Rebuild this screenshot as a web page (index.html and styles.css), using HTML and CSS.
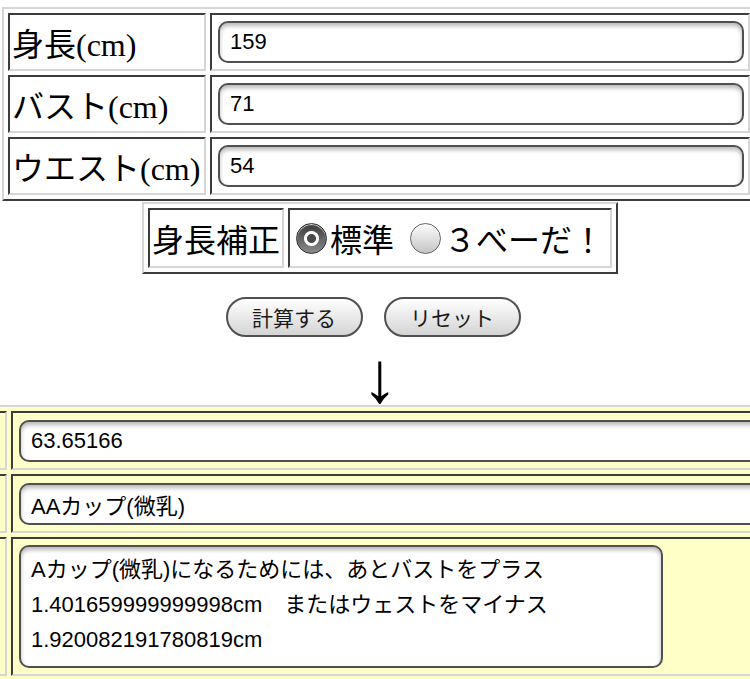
FILE: index.html
```html
<!DOCTYPE html>
<html lang="ja">
<head>
<meta charset="utf-8">
<title>カップ判定</title>
<link rel="stylesheet" href="styles.css">
</head>
<body>
<div class="wrap">
  <div class="tbl t1">
    <div class="cell lbl">身長(cm)</div>
    <div class="cell fld"><input class="box" type="text" value="159"></div>
    <div class="cell lbl">バスト(cm)</div>
    <div class="cell fld"><input class="box" type="text" value="71"></div>
    <div class="cell lbl">ウエスト(cm)</div>
    <div class="cell fld"><input class="box" type="text" value="54"></div>
  </div>
  <div class="tbl t2">
    <div class="cell lbl">身長補正</div>
    <div class="cell radios">
      <label class="opt"><input type="radio" name="h" class="rad" checked>標準</label>
      <label class="opt"><input type="radio" name="h" class="rad">３べーだ！</label>
    </div>
  </div>
  <div class="btns">
    <button class="btn" type="button">計算する</button>
    <button class="btn" type="button">リセット</button>
  </div>
  <div class="arrow">↓</div>
</div>
<div class="tbl t3">
  <div class="cell side"></div>
  <div class="cell fld"><input class="box" type="text" value="63.65166"></div>
  <div class="cell side"></div>
  <div class="cell fld"><input class="box" type="text" value="AAカップ(微乳)"></div>
  <div class="cell side"></div>
  <div class="cell fld top"><textarea class="box area">Aカップ(微乳)になるためには、あとバストをプラス
1.401659999999998cm　またはウェストをマイナス
1.920082191780819cm</textarea></div>
</div>
</body>
</html>
```
FILE: styles.css
```css
html, body {
  margin: 0;
  padding: 0;
  overflow: hidden;
  background: #fff;
}
body {
  font-family: "Liberation Serif", "Noto Sans CJK JP", serif;
  color: #000;
}
.wrap {
  width: 760px;
  padding-top: 7px;
}
.tbl {
  display: grid;
  gap: 4px;
  padding: 4px;
  border: 2px solid;
  border-color: #d6d6d6 #3c3c3c #3c3c3c #d6d6d6;
  box-sizing: border-box;
}
.cell {
  border: 2px solid;
  border-color: #3c3c3c #d6d6d6 #d6d6d6 #3c3c3c;
  padding: 2px;
  box-sizing: border-box;
  display: flex;
  align-items: center;
  min-width: 0;
}
.lbl {
  font-size: 32px;
  white-space: nowrap;
}
.t1 {
  margin-left: 2px;
  width: 754px;
  grid-template-columns: 198px 540px;
  grid-auto-rows: 58px;
}
.box {
  box-sizing: border-box;
  height: 42px;
  margin: 0 0 0 4px;
  border: 2px solid #505050;
  border-radius: 10px;
  background: #fff;
  box-shadow: inset 0 3px 4px rgba(0, 0, 0, 0.28);
  font-family: "Liberation Sans", "Noto Sans CJK JP", sans-serif;
  font-size: 22px;
  padding: 0 10px;
  color: #000;
  -webkit-appearance: none;
  appearance: none;
  outline: none;
}
.t1 .box {
  width: 526px;
}
.t2 {
  width: 476px;
  margin: 1px auto 0;
  grid-template-columns: 136px 324px;
  grid-auto-rows: 60px;
}
.radios {
  font-size: 32px;
  white-space: nowrap;
}
.opt {
  display: flex;
  align-items: center;
}
.opt + .opt {
  margin-left: 12px;
}
.rad {
  -webkit-appearance: none;
  appearance: none;
  box-sizing: border-box;
  width: 31px;
  height: 31px;
  margin: 0 3px 0 4px;
  border-radius: 50%;
  border: 1px solid #666;
  background: linear-gradient(#fdfdfd, #c4c4c4);
  box-shadow: inset 0 1px 1px rgba(255, 255, 255, 0.9);
}
.rad:checked {
  border-color: #2e2e2e;
  background:
    radial-gradient(circle, #4a4a4a 0 4px, #fff 5px 7px, rgba(255, 255, 255, 0) 8px),
    linear-gradient(#3a3a3a, #8c8c8c);
}
.btns {
  display: flex;
  justify-content: center;
  gap: 21px;
  margin-top: 23px;
  padding-right: 14px;
}
.btn {
  box-sizing: border-box;
  width: 137px;
  height: 40px;
  padding: 0;
  border: 2px solid #505050;
  border-radius: 20px;
  background: linear-gradient(#ffffff, #d4d4d4);
  font-family: "Liberation Sans", "Noto Sans CJK JP", sans-serif;
  font-size: 21px;
  color: #1a1a1a;
}
.arrow {
  height: 68px;
  font-family: "Liberation Serif", "Noto Sans CJK JP", serif;
  font-size: 72px;
  line-height: 82px;
  text-align: center;
  padding-left: 0;
}
.t3 {
  margin-left: -100px;
  width: 1000px;
  background: #ffffc8;
  grid-template-columns: 101px 1fr;
  grid-template-rows: 59px 59px auto;
}
.t3 .cell {
  background: #ffffc8;
}
.t3 .box {
  width: 800px;
}
.t3 .top {
  align-items: flex-start;
}
.t3 .area {
  width: 644px;
  height: 123px;
  margin-top: 4px;
  margin-bottom: 4px;
  padding: 5px 10px;
  line-height: 35px;
  resize: none;
  overflow: hidden;
  white-space: pre;
}
```
